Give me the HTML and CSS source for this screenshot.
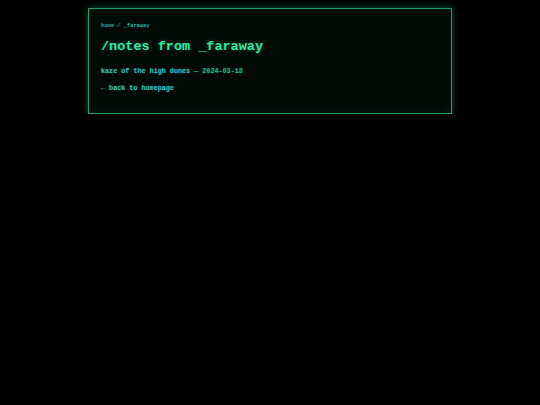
FILE: index.html
```html
<!DOCTYPE html>
<html>
<head>
<meta charset="utf-8">
<link rel="stylesheet" href="styles.css">
</head>
<body>
<main class="panel">
  <nav class="crumbs"><a href="#">home</a> / <span>_faraway</span></nav>
  <h1 class="title">/notes from _faraway</h1>
  <p class="meta"><span class="author">kaze of the high dunes</span> <span class="date">— 2024-03-18</span></p>
  <a class="back" href="#">← back to homepage</a>
</main>
</body>
</html>
```
FILE: styles.css
```css
html, body {
  margin: 0;
  padding: 0;
  background: #000;
}
body {
  font-family: "Liberation Mono", "DejaVu Sans Mono", monospace;
  padding-top: 8px;
}
.panel {
  box-sizing: border-box;
  width: 364px;
  margin: 0 auto;
  background: #020a06;
  border: 1px solid #2a9a68;
  box-shadow: 0 0 7px rgba(40, 200, 130, 0.4), inset 0 0 10px rgba(40, 200, 130, 0.08);
  padding: 13px 12px 20px;
  display: flex;
  flex-direction: column;
  align-items: flex-start;
}
.crumbs {
  font-size: 5.4px;
  line-height: 8px;
  color: #34c0b8;
  text-shadow: 0 0 2px rgba(50, 200, 190, 0.4);
}
.crumbs a {
  color: #34c0b8;
  text-decoration: none;
}
.title {
  margin: 8px 0 0;
  font-size: 13.5px;
  line-height: 18px;
  font-weight: bold;
  color: #33e8a0;
  text-shadow: 0 0 4px rgba(50, 230, 160, 0.4);
}
.meta {
  margin: 11px 0 0;
  font-size: 6.75px;
  line-height: 9px;
  font-weight: bold;
  text-shadow: 0 0 2px rgba(50, 200, 170, 0.4);
}
.author {
  color: #34c0b8;
}
.date {
  color: #24b474;
}
.back {
  margin-top: 8px;
  font-size: 6.75px;
  line-height: 9px;
  font-weight: bold;
  color: #34c0b8;
  text-decoration: none;
  text-shadow: 0 0 2px rgba(50, 200, 190, 0.4);
}
```
